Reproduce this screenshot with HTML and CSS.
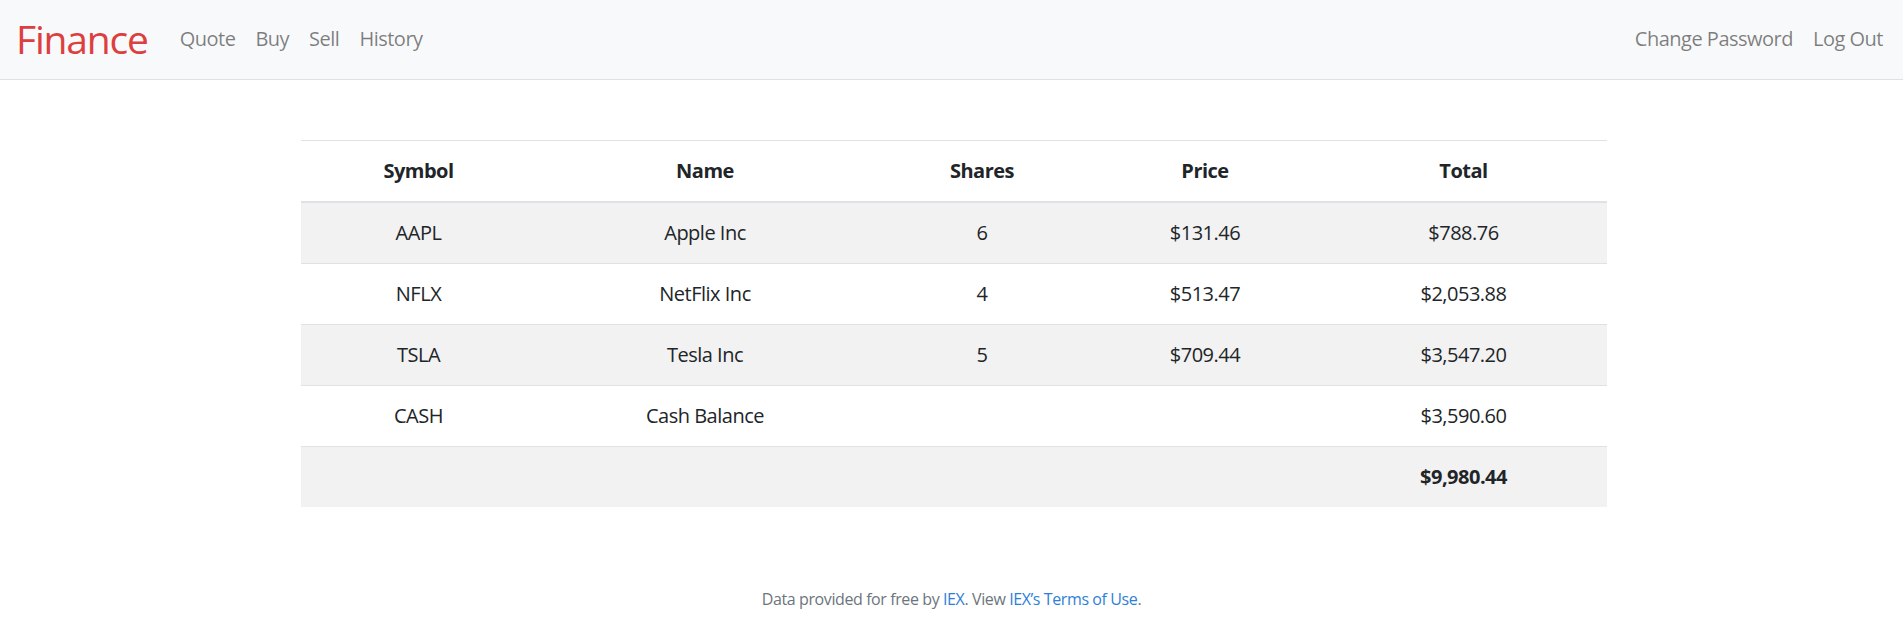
FILE: index.html
```html
<!DOCTYPE html>
<html lang="en">
<head>
<meta charset="utf-8">
<title>Finance: Portfolio</title>
<link rel="stylesheet" href="styles.css">
</head>
<body>
<nav class="navbar">
  <a class="brand" href="#">Finance</a>
  <ul class="nav-links">
    <li><a href="#">Quote</a></li>
    <li><a href="#">Buy</a></li>
    <li><a href="#">Sell</a></li>
    <li><a href="#">History</a></li>
  </ul>
  <ul class="nav-links nav-right">
    <li><a href="#">Change Password</a></li>
    <li><a href="#">Log Out</a></li>
  </ul>
</nav>
<main class="main">
  <table class="portfolio">
    <colgroup>
      <col class="c-symbol">
      <col class="c-name">
      <col class="c-shares">
      <col class="c-price">
      <col class="c-total">
    </colgroup>
    <thead>
      <tr><th>Symbol</th><th>Name</th><th>Shares</th><th>Price</th><th>Total</th></tr>
    </thead>
    <tbody>
      <tr><td>AAPL</td><td>Apple Inc</td><td>6</td><td>$131.46</td><td>$788.76</td></tr>
      <tr><td>NFLX</td><td>NetFlix Inc</td><td>4</td><td>$513.47</td><td>$2,053.88</td></tr>
      <tr><td>TSLA</td><td>Tesla Inc</td><td>5</td><td>$709.44</td><td>$3,547.20</td></tr>
      <tr><td>CASH</td><td>Cash Balance</td><td></td><td></td><td>$3,590.60</td></tr>
      <tr><td></td><td></td><td></td><td></td><td class="grand">$9,980.44</td></tr>
    </tbody>
  </table>
</main>
<footer class="footer">
  Data provided for free by <a href="#">IEX</a>. View <a href="#">IEX’s Terms of Use</a>.
</footer>
</body>
</html>
```

FILE: styles.css
```css
html, body {
  margin: 0;
  padding: 0;
}

body {
  font-family: "Segoe UI", "Open Sans", "Noto Sans", sans-serif;
  font-size: 20px;
  line-height: 1.5;
  letter-spacing: -0.5px;
  color: #212529;
  background: #ffffff;
}

a {
  text-decoration: none;
}

.navbar {
  display: flex;
  align-items: center;
  height: 79px;
  padding: 0 20px 0 16px;
  background: #f8f9fa;
  border-bottom: 1px solid #dee2e6;
}

.brand {
  font-size: 39px;
  line-height: 60px;
  letter-spacing: -1.2px;
  color: #dd3f3f;
  margin-right: 22px;
  padding-bottom: 2px;
}

.nav-links {
  display: flex;
  list-style: none;
  margin: 0;
  padding: 0 0 2px 0;
}

.nav-links a {
  display: block;
  padding: 0 10px;
  line-height: 30px;
  color: rgba(0, 0, 0, 0.5);
}

.nav-right {
  margin-left: auto;
  margin-right: -10px;
}

.main {
  padding: 60px 296px 60px 301px;
}

.portfolio {
  width: 100%;
  border-collapse: collapse;
  table-layout: fixed;
  margin-bottom: 20px;
  text-align: center;
}

.c-symbol { width: 235px; }
.c-name { width: 338px; }
.c-shares { width: 216px; }
.c-price { width: 230px; }
.c-total { width: 287px; }

.portfolio th,
.portfolio td {
  padding: 15px;
  height: 30px;
  border-top: 1px solid #dee2e6;
}

.portfolio th {
  font-weight: 700;
  border-bottom: 2px solid #dee2e6;
}

.portfolio tbody tr:nth-child(odd) {
  background: rgba(0, 0, 0, 0.05);
}

.portfolio .grand {
  font-weight: 700;
}

.footer {
  text-align: center;
  font-size: 16px;
  line-height: 24px;
  letter-spacing: -0.4px;
  color: #6c757d;
  padding-bottom: 20px;
}

.footer a {
  color: #2f7fd8;
}
```
